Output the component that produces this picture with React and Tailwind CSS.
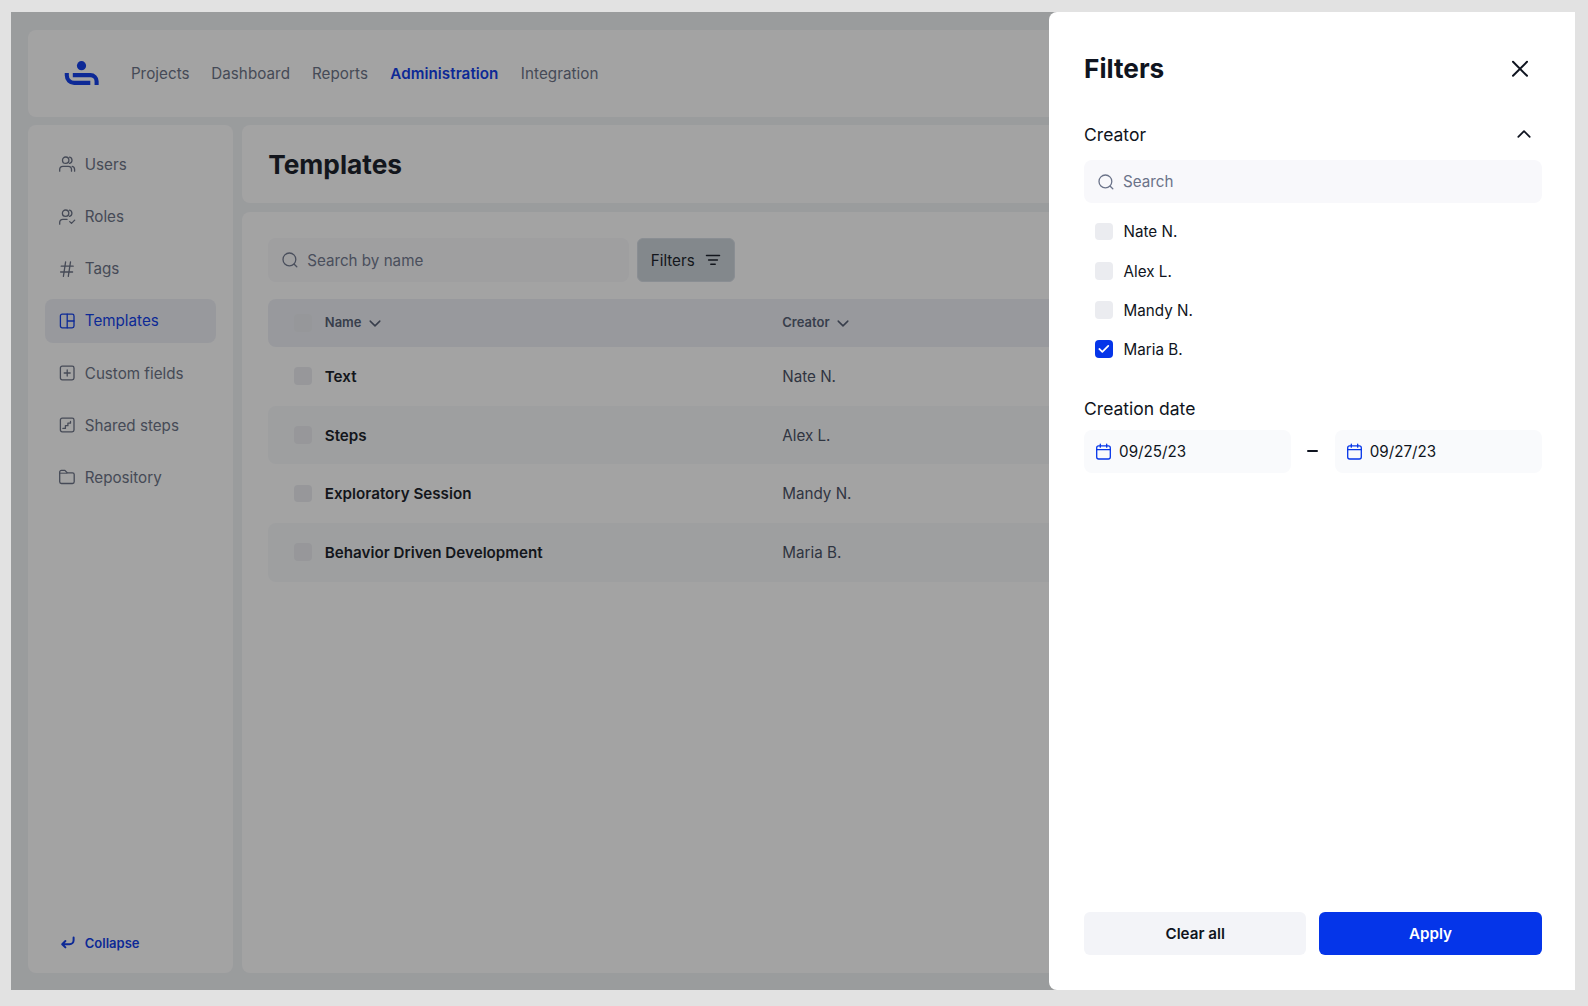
import React from "react";

function Icon({ size = 18, sw = 1.3, className = "", children }) {
  return (
    <svg
      width={size}
      height={size}
      viewBox={`0 0 ${size} ${size}`}
      fill="none"
      stroke="currentColor"
      strokeWidth={sw}
      strokeLinecap="round"
      strokeLinejoin="round"
      className={`shrink-0 ${className}`}
    >
      {children}
    </svg>
  );
}

const icons = {
  users: (
    <>
      <circle cx="7.7" cy="5.2" r="3.2" />
      <path d="M1.7 16.2v-1.7a3.2 3.2 0 0 1 3.2-3.2h5.4a3.2 3.2 0 0 1 3.2 3.2v1.7" />
      <path d="M11.6 2.1a3.2 3.2 0 0 1 0 6.2M14.2 11.4a3.2 3.2 0 0 1 2.4 3.1v1.7" />
    </>
  ),
  roles: (
    <>
      <circle cx="7.6" cy="5.2" r="3.2" />
      <path d="M1.7 16.2v-1.7a3.2 3.2 0 0 1 3.2-3.2h4.2" />
      <path d="M11.5 2.1a3.2 3.2 0 0 1 0 6.2M11.7 13.6l1.8 1.8 3.2-3.3" />
    </>
  ),
  tags: <path d="M3.2 6.2h12M2.6 12h12M7.6 1.8l-2.2 14.6M12.5 1.8l-2.2 14.6" />,
  templates: (
    <>
      <rect x="2.4" y="2.2" width="13.6" height="13.6" rx="1.8" />
      <path d="M9.2 2.2v13.6M9.2 9H16" />
    </>
  ),
  fields: (
    <>
      <rect x="2.4" y="2.2" width="13.6" height="13.6" rx="1.8" />
      <path d="M9.2 6v6M6.2 9h6" />
    </>
  ),
  steps: (
    <>
      <rect x="2.4" y="2.2" width="13.6" height="13.6" rx="1.8" />
      <path d="M4.9 12.4h2.5V9.7h2.5V7.2h2.6V5.4" />
    </>
  ),
  repo: (
    <>
      <path d="M3.4 2.4h3.5l2.3 2.4h5.3a1.7 1.7 0 0 1 1.7 1.7v7.3a1.7 1.7 0 0 1-1.7 1.7H3.4a1.7 1.7 0 0 1-1.7-1.7V4.1a1.7 1.7 0 0 1 1.7-1.7z" />
      <path d="M1.9 5.2h7" strokeWidth="1" />
    </>
  ),
};

const menu = [
  ["Users", icons.users],
  ["Roles", icons.roles],
  ["Tags", icons.tags],
  ["Templates", icons.templates],
  ["Custom fields", icons.fields],
  ["Shared steps", icons.steps],
  ["Repository", icons.repo],
];

const rows = [
  ["Text", "Nate N."],
  ["Steps", "Alex L."],
  ["Exploratory Session", "Mandy N."],
  ["Behavior Driven Development", "Maria B."],
];

function SearchIcon() {
  return (
    <Icon size={18} className="text-[#6b7389]">
      <circle cx="8.4" cy="8.4" r="6.4" />
      <path d="M13.2 13.2l2.6 2.6" />
    </Icon>
  );
}

function ChevronDown() {
  return (
    <Icon size={12} sw={1.5}>
      <path d="M1.2 4.1L6 8.9l4.8-4.8" />
    </Icon>
  );
}

function Box({ className = "bg-[#ebecf0]" }) {
  return <span className={`block size-[17.6px] shrink-0 rounded-[4px] ${className}`} />;
}

function DateField({ value }) {
  return (
    <div className="flex h-[43.4px] w-[206.8px] items-center rounded-lg bg-[#f9fafc] pl-[11px]">
      <Icon size={18} className="text-[#0535e9]">
        <rect x="1.7" y="2.8" width="13.6" height="13.2" rx="2" />
        <path d="M1.7 6.7h13.6M5.3 1.2v3M11.7 1.2v3" />
      </Icon>
      <span className="ml-[6px]">{value}</span>
    </div>
  );
}

function Logo() {
  return (
    <svg width="36" height="26" viewBox="0 0 36 26" fill="none" stroke="#0535e9" strokeWidth="4.1">
      <circle cx="17.5" cy="5.7" r="4.6" fill="#0535e9" stroke="none" />
      <path d="M2.8 13v2.6a7.3 7.3 0 0 0 7.3 7.3h16.2" />
      <path d="M8.8 15.1h17.6a6.2 6.2 0 0 1 6.2 6.2V25" />
    </svg>
  );
}

export default function App() {
  return (
    <div className="h-[1006px] w-[1588px] overflow-hidden bg-[#e2e2e2] pt-[12.4px] pl-[11px] font-['Inter',sans-serif] text-[15.2px] leading-[23px] text-[#0f1420]">
      <div className="relative h-[977.6px] w-[1564.4px] overflow-hidden bg-[#f1f3f6]">
        <div className="flex h-full flex-col gap-[8.7px] p-[17.4px]">
          <header className="flex h-[87px] shrink-0 items-center rounded-lg bg-white pl-[35.4px]">
            <Logo />
            <nav className="ml-[31.1px] flex gap-[22px] pt-[0.8px] tracking-[0.05px] text-[#646c80]">
              <span>Projects</span>
              <span className="-ml-[0.4px]">Dashboard</span>
              <span>Reports</span>
              <span className="ml-[0.4px] font-semibold text-[#0535e9]">Administration</span>
              <span className="ml-[0.4px]">Integration</span>
            </nav>
          </header>
          <div className="flex min-h-0 flex-1 gap-[8.7px]">
            <aside className="flex w-[205.1px] shrink-0 flex-col rounded-lg bg-white px-[17px] pt-[17.3px]">
              <div className="flex flex-col gap-[8.75px]">
                {menu.map(([label, icon]) => (
                  <div
                    key={label}
                    className={
                      "flex h-[43.4px] items-center gap-[9px] rounded-lg pl-[12.4px] " +
                      (label === "Templates" ? "bg-[#edeff6] text-[#0535e9]" : "text-[#646c80]")
                    }
                  >
                    <Icon>{icon}</Icon>
                    <span>{label}</span>
                  </div>
                ))}
              </div>
              <div className="mt-auto mb-[17.9px] flex items-center gap-[9px] pl-[12.4px] text-[13px] font-semibold text-[#0535e9]">
                <Icon sw={2}>
                  <path d="M15.6 3.6v2.6a4 4 0 0 1-4 4H4.4M7.4 7l-3.2 3.2 3.2 3.2" />
                </Icon>
                <span>Collapse</span>
              </div>
            </aside>
            <main className="flex min-w-0 flex-1 flex-col gap-[8.7px]">
              <div className="flex h-[78px] shrink-0 items-center rounded-lg bg-white pl-[26px] text-[26.3px] font-bold">
                Templates
              </div>
              <div className="flex-1 rounded-lg bg-white px-[26px] pt-[26.2px]">
                <div className="flex gap-[8.7px]">
                  <div className="flex h-[43.4px] w-[360.6px] items-center gap-[8px] rounded-lg bg-[#f8f8fb] pl-[13px] text-[#6b7389]">
                    <SearchIcon />
                    <span className="pt-[0.8px]">Search by name</span>
                  </div>
                  <div className="flex h-[43.4px] w-[97.3px] items-center justify-between rounded-[6px] border border-[#d5dce4] bg-[#cad2d9] pr-[12.3px] pl-[12.3px]">
                    <span className="pt-[0.8px]">Filters</span>
                    <Icon size={16} sw={1.5}>
                      <path d="M1.5 3.6h13M3.6 8h8.8M5.8 12.3h4.4" />
                    </Icon>
                  </div>
                </div>
                <div className="mt-[17.4px] flex h-[47.8px] items-center rounded-lg bg-[#edeff6] pl-[26px] text-[13px] font-semibold text-[#4e586e]">
                  <Box className="bg-[#eaecf0]" />
                  <div className="ml-[13px] flex w-[457.5px] items-center gap-[7.3px] pb-[0.4px]">
                    <span>Name</span>
                    <ChevronDown />
                  </div>
                  <div className="flex items-center gap-[7.3px] pb-[0.4px]">
                    <span>Creator</span>
                    <ChevronDown />
                  </div>
                </div>
                {rows.map(([name, creator], i) => (
                  <div
                    key={name}
                    className={"flex h-[58.67px] items-center rounded-lg pl-[26px] " + (i % 2 ? "bg-[#f7f9fb]" : "")}
                  >
                    <Box />
                    <span className="ml-[13px] w-[457.5px] pt-[0.8px] font-semibold">{name}</span>
                    <span className="pt-[0.8px] text-[#3f485c]">{creator}</span>
                  </div>
                ))}
              </div>
            </main>
          </div>
        </div>
        <div className="absolute inset-0 bg-[#1a1a1a]/40" />
        <section className="absolute inset-y-0 right-0 flex w-[526px] flex-col rounded-l-lg bg-white pr-[33.8px] pl-[34.7px]">
          <div className="mt-[39.6px] flex h-[34px] items-center justify-between pr-[12.6px]">
            <h1 className="text-[26.2px] font-bold">Filters</h1>
            <Icon size={18} sw={2}>
              <path d="M2 1.8l14 14M16 1.8L2 15.8" />
            </Icon>
          </div>
          <div className="mt-[36px] flex h-[24px] items-center justify-between pr-[10.4px] text-[17.5px]">
            <span className="pt-[0.3px]">Creator</span>
            <Icon size={14} sw={1.8}>
              <path d="M1.3 9.8L7 4.1l5.7 5.7" />
            </Icon>
          </div>
          <div className="mt-[14px] flex h-[43.2px] items-center gap-[8px] rounded-lg bg-[#f8f8fb] pl-[13px] text-[#6b7389]">
            <SearchIcon />
            <span>Search</span>
          </div>
          <div className="mt-[17.5px] flex flex-col gap-[17.1px] pl-[10.9px]">
            {["Nate N.", "Alex L.", "Mandy N."].map((n) => (
              <div key={n} className="flex h-[22px] items-center gap-[11px]">
                <Box />
                <span className="pt-[0.5px]">{n}</span>
              </div>
            ))}
            <div className="flex h-[22px] items-center gap-[11px]">
              <svg width="17.6" height="17.6" viewBox="0 0 18 18" fill="none" className="shrink-0 rounded-[4px] bg-[#0535e9]">
                <path d="M4.4 9.2l3.1 3 6.1-6.1" stroke="white" strokeWidth="1.8" strokeLinecap="round" strokeLinejoin="round" />
              </svg>
              <span className="pt-[0.5px]">Maria B.</span>
            </div>
          </div>
          <div className="mt-[36.9px] h-[24px] text-[17.5px] leading-[24px]">Creation date</div>
          <div className="mt-[9.1px] flex items-center justify-between">
            <DateField value="09/25/23" />
            <span className="mb-px h-[2px] w-[11px] rounded-full bg-[#0f1420]" />
            <DateField value="09/27/23" />
          </div>
          <div className="mt-auto mb-[34.6px] flex gap-[13px] font-semibold">
            <div className="flex h-[43.4px] flex-1 items-center justify-center rounded-[6px] bg-[#f3f4f8]">Clear all</div>
            <div className="flex h-[43.4px] flex-1 items-center justify-center rounded-[6px] bg-[#0535e9] text-white">Apply</div>
          </div>
        </section>
      </div>
    </div>
  );
}
